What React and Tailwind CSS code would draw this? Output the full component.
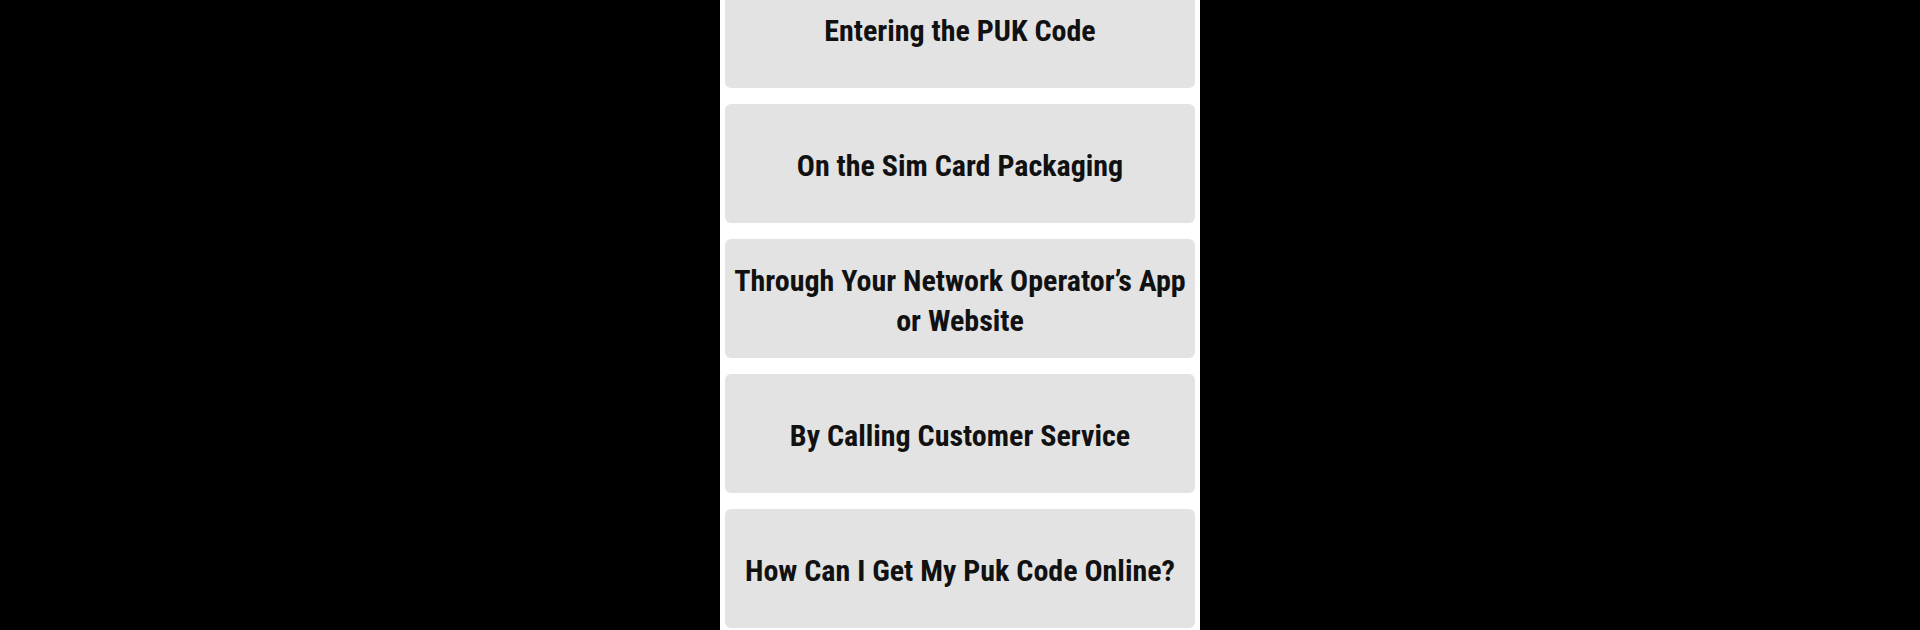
const items = [
  'Entering the PUK Code',
  'On the Sim Card Packaging',
  'Through Your Network Operator’s App or Website',
  'By Calling Customer Service',
  'How Can I Get My Puk Code Online?',
];

export default function App() {
  return (
    <div className="h-[630px] w-full bg-black flex justify-center overflow-hidden">
      <div className="w-[480px] h-full bg-white overflow-hidden">
        <div className="-mt-[31px] flex flex-col gap-[16px] px-[5px]">
          {items.map((t) => (
            <div
              key={t}
              className="h-[119px] shrink-0 rounded-[6px] bg-[#e3e3e3] flex items-center justify-center px-1 pt-[4px] text-center"
            >
              <span
                className="text-[30px] leading-[40px] font-bold text-[#111] font-stretch-condensed"
                style={{ fontFamily: '"Roboto Condensed", Roboto, sans-serif' }}
              >
                {t}
              </span>
            </div>
          ))}
        </div>
      </div>
    </div>
  );
}
